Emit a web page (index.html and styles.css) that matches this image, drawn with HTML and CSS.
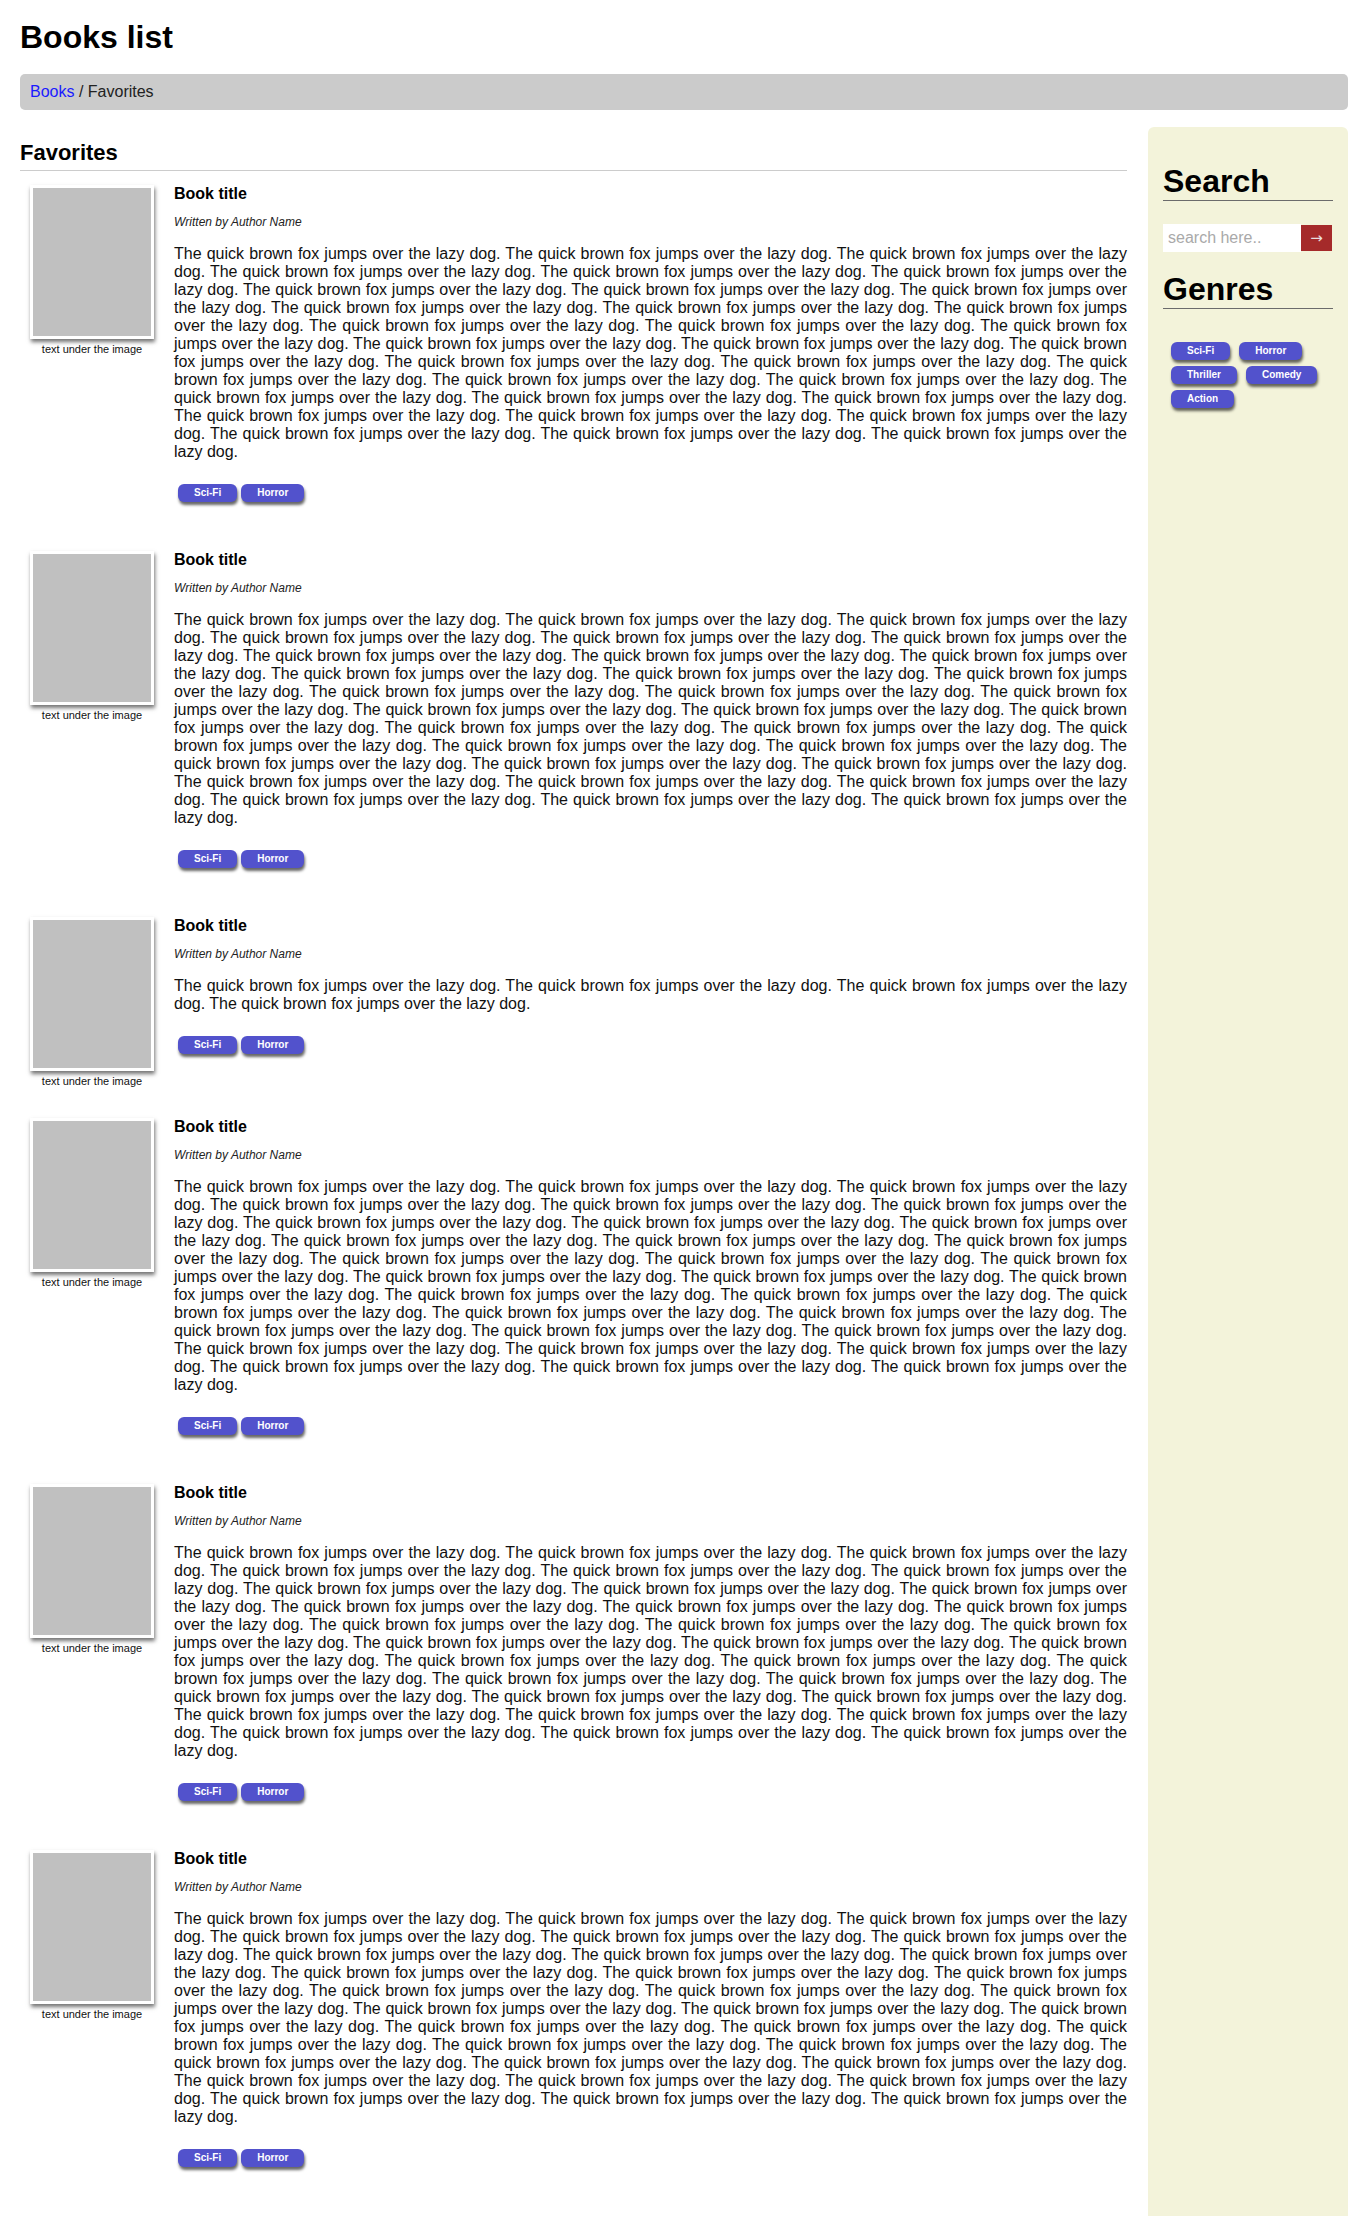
FILE: index.html
```html
<!DOCTYPE html>
<html lang="en">
<head>
<meta charset="utf-8">
<title>Books list</title>
<link rel="stylesheet" href="styles.css">
</head>
<body>
<div class="page">
  <h1 class="page-title">Books list</h1>
  <nav class="breadcrumb"><a href="#" class="crumb-link">Books</a> / Favorites</nav>
  <div class="layout">
    <main class="main">
      <h2 class="section-title">Favorites</h2>
      <div class="book-list" id="books"></div>
    </main>
    <aside class="sidebar">
      <h2 class="side-title">Search</h2>
      <form class="search" onsubmit="return false">
        <input class="search-input" type="text" placeholder="search here..">
        <button class="search-btn" type="submit">&rarr;</button>
      </form>
      <h2 class="side-title side-title-next">Genres</h2>
      <div class="genre-tags">
        <span class="tag">Sci-Fi</span>
        <span class="tag">Horror</span>
        <span class="tag">Thriller</span>
        <span class="tag">Comedy</span>
        <span class="tag">Action</span>
      </div>
    </aside>
  </div>
</div>
<script src="script.js"></script>
</body>
</html>
```
FILE: script.js
```js
(function () {
  var sentence = "The quick brown fox jumps over the lazy dog.";
  var counts = [32, 32, 4, 32, 32, 32];
  var list = document.getElementById("books");
  counts.forEach(function (n) {
    var parts = [];
    for (var i = 0; i < n; i++) parts.push(sentence);
    var item = document.createElement("article");
    item.className = "book";
    item.innerHTML =
      '<figure class="cover-wrap"><div class="cover"></div>' +
      '<figcaption class="cover-caption">text under the image</figcaption></figure>' +
      '<div class="info">' +
      '<h3 class="book-title">Book title</h3>' +
      '<p class="author">Written by Author Name</p>' +
      '<p class="desc">' + parts.join(" ") + '</p>' +
      '<div class="tags"><span class="tag">Sci-Fi</span><span class="tag">Horror</span></div>' +
      '</div>';
    list.appendChild(item);
  });
})();
```
FILE: styles.css
```css
html, body {
  margin: 0;
  padding: 0;
  background: #fff;
}
body {
  font-family: "Liberation Sans", Arial, sans-serif;
  color: #111;
}
.page {
  padding: 19px 20px 20px;
}
.page-title {
  font-size: 32px;
  line-height: 37px;
  font-weight: bold;
  margin: 0 0 18px;
  color: #000;
}
.breadcrumb {
  background: #cbcbcb;
  border-radius: 5px;
  padding: 9px 10px;
  font-size: 16px;
  line-height: 18px;
  color: #222;
  margin-bottom: 17px;
}
.crumb-link {
  color: #1a1aff;
  text-decoration: none;
}
.layout {
  display: flex;
  gap: 21px;
  align-items: stretch;
}
.main {
  width: 1107px;
  flex: none;
}
.section-title {
  margin: 13px 0 0;
  font-size: 22px;
  line-height: 26px;
  padding-bottom: 4px;
  border-bottom: 1px solid #cccccc;
  color: #000;
}
.book-list {
  margin-top: 14px;
}
.book {
  display: flex;
  gap: 20px;
  padding-left: 10px;
  margin-bottom: 30px;
  align-items: flex-start;
}
.cover-wrap {
  width: 124px;
  margin: 0;
  flex: none;
  text-align: center;
}
.cover {
  width: 118px;
  height: 148px;
  background: #c0c0c0;
  border: 3px solid #fff;
  box-shadow: 1px 3px 4px rgba(0, 0, 0, 0.55);
}
.cover-caption {
  font-size: 11px;
  line-height: 13px;
  margin-top: 4px;
  color: #111;
}
.info {
  flex: 1;
  min-width: 0;
}
.book-title {
  margin: 0;
  font-size: 16px;
  line-height: 18px;
  font-weight: bold;
  color: #000;
}
.author {
  margin: 12px 0 0;
  font-size: 12px;
  line-height: 14px;
  font-style: italic;
  color: #222;
}
.desc {
  margin: 16px 0 0;
  font-size: 16px;
  line-height: 18px;
  text-align: justify;
  color: #111;
}
.tags {
  display: flex;
  gap: 4px;
  margin: 23px 0 19px;
  padding-left: 4px;
}
.tag {
  display: inline-block;
  background: #5252cc;
  color: #fff;
  font-size: 10px;
  line-height: 12px;
  font-weight: bold;
  padding: 3px 16px;
  border-radius: 6px;
  box-shadow: 1px 3px 3px rgba(0, 0, 0, 0.6);
}
.sidebar {
  width: 200px;
  flex: none;
  box-sizing: border-box;
  background: #f3f3da;
  border-radius: 6px 6px 0 0;
  padding: 15px;
}
.side-title {
  margin: 21px 0 0;
  font-size: 32px;
  line-height: 37px;
  font-weight: bold;
  color: #000;
  border-bottom: 1px solid #6b6b6b;
}
.side-title-next {
  margin-top: 19px;
}
.search {
  display: flex;
  margin: 23px 0 0;
  height: 28px;
}
.search-input {
  width: 138px;
  height: 28px;
  box-sizing: border-box;
  border: none;
  padding: 0 5px;
  font-family: "Liberation Sans", Arial, sans-serif;
  font-size: 16px;
  background: #fff;
  color: #333;
  outline: none;
}
.search-input::placeholder {
  color: #a9a9a9;
}
.search-btn {
  width: 31px;
  height: 26px;
  margin-top: 1px;
  border: none;
  padding: 0;
  background: #a52a2a;
  color: #e8dede;
  font-family: "DejaVu Sans", "Liberation Sans", sans-serif;
  font-size: 15px;
  line-height: 26px;
  cursor: pointer;
}
.genre-tags {
  display: flex;
  flex-wrap: wrap;
  gap: 6px 9px;
  margin-top: 33px;
  padding-left: 8px;
}
```
